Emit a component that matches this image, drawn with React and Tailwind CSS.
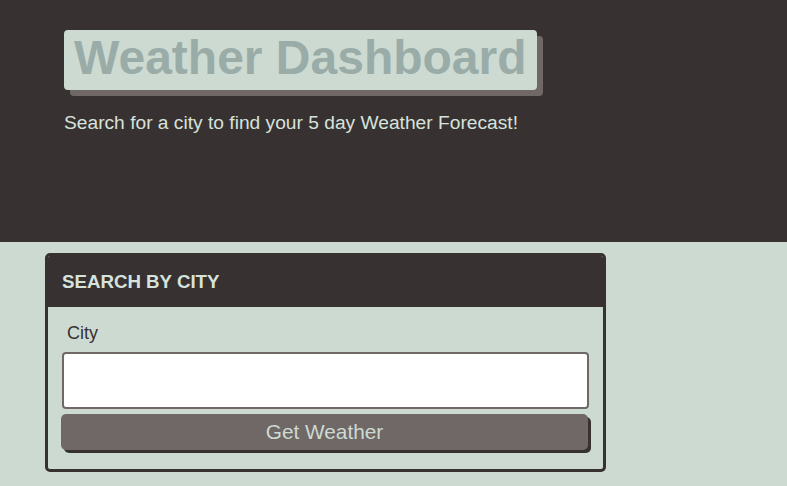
export default function App() {
  return (
    <div className="min-h-screen bg-[#cddad2] font-['Liberation_Sans',Arial,sans-serif]">
      <header className="h-[242px] bg-[#383131] pl-[64px] pt-[30px]">
        <h1 className="inline-block h-[60px] rounded-[4px] bg-[#cddad2] px-[10px] text-[48px] font-bold leading-[56px] text-[#9aaca8] shadow-[6px_6px_0_#6f6867]">
          Weather Dashboard
        </h1>
        <p className="mt-[19px] text-[19.2px] leading-[27px] text-[#d6e2dc]">
          Search for a city to find your 5 day Weather Forecast!
        </p>
      </header>

      <section className="ml-[45px] mt-[11px] w-[561px] overflow-hidden rounded-[5px] border-[3px] border-[#383131]">
        <div className="h-[51px] bg-[#383131] pl-[14px] pt-[12px]">
          <h2 className="text-[18.7px] font-bold uppercase leading-[27px] text-[#d6e2dc]">
            Search by City
          </h2>
        </div>
        <div className="pt-[13px] pb-[19px]">
          <label className="block pl-[19px] text-[18px] leading-[27px] text-[#383131]">
            City
          </label>
          <input
            type="text"
            className="mt-[5px] ml-[14px] block h-[57px] w-[527px] rounded-[4px] border-2 border-[#6f6867] bg-white"
          />
          <button className="mt-[5px] ml-[13px] block h-[36px] w-[527px] rounded-[5px] bg-[#6f6867] text-[20.8px] leading-[36px] text-[#cddad2] shadow-[3px_3px_0_#383131]">
            Get Weather
          </button>
        </div>
      </section>
    </div>
  );
}
